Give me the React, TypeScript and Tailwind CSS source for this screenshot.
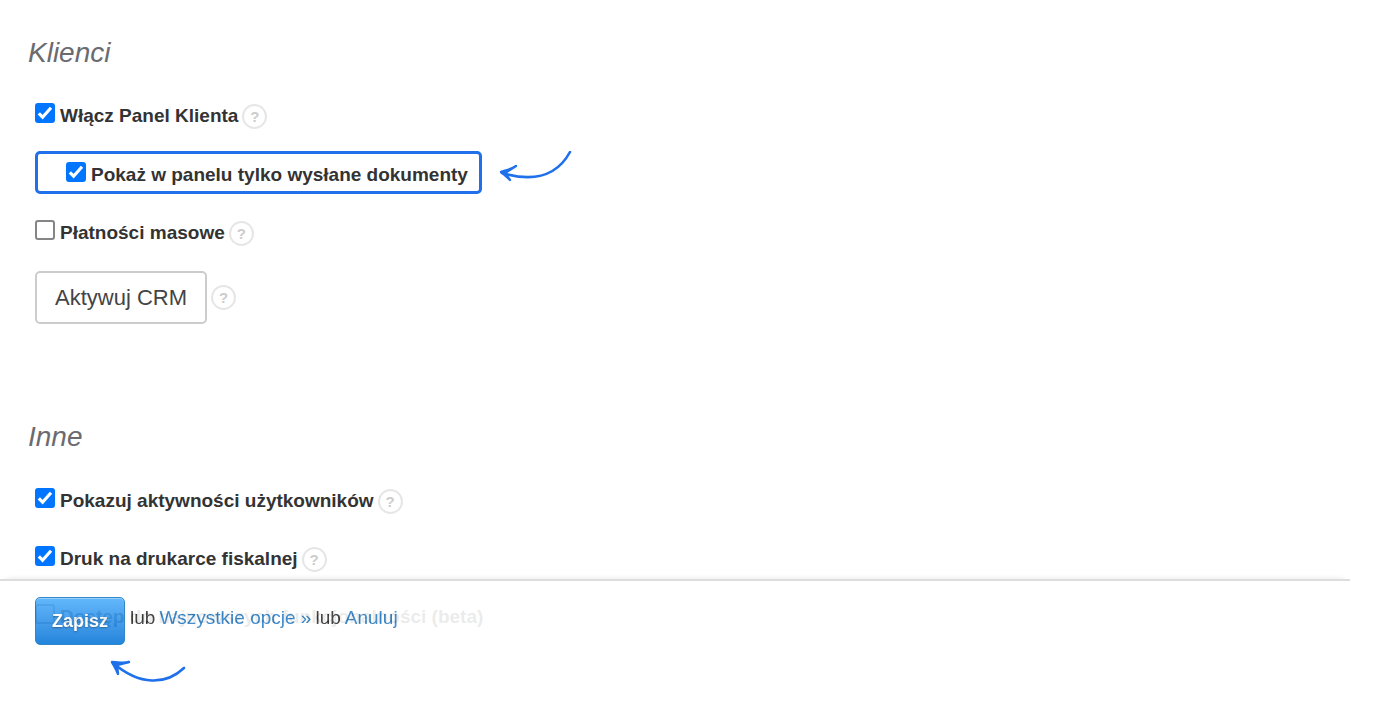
import { useId, useState } from 'react';

const Hint = () => (
  <button
    type="button"
    aria-label="Pomoc"
    className="flex size-[25px] shrink-0 items-center justify-center rounded-full border-2 border-[#e6e6e6] bg-white text-[15px] leading-none font-bold text-[#cccccc]"
  >
    ?
  </button>
);

interface OptionProps {
  label: string;
  checked?: boolean;
  hint?: boolean;
}

const Option = ({ label, checked = false, hint = false }: OptionProps) => {
  const id = useId();
  const [on, setOn] = useState(checked);

  return (
    <div className="flex h-[26px] items-center gap-1">
      <span className="relative mr-px mb-[6px] flex size-5 shrink-0">
        <input
          id={id}
          type="checkbox"
          checked={on}
          onChange={() => setOn(!on)}
          className="size-5 appearance-none rounded-[3px] border-2 border-[#858585] bg-white checked:border-[#0075ff] checked:bg-[#0075ff]"
        />
        {on && (
          <svg viewBox="0 0 20 20" className="pointer-events-none absolute inset-0 size-5" fill="none">
            <path d="M3.8 10.4 L7.6 14.2 L16 4.8" stroke="#fff" strokeWidth="3.2" />
          </svg>
        )}
      </span>
      <label htmlFor={id} className="text-[19px] leading-6 font-bold whitespace-nowrap">
        {label}
      </label>
      {hint && <Hint />}
    </div>
  );
};

const App = () => (
  <div className="min-h-screen bg-white font-['Liberation_Sans',Arial,sans-serif] text-[#333333]">
    <main className="px-7 pt-9">
      <section>
        <h2 className="text-[28px] leading-[34px] text-[#6b6b6f] italic">Klienci</h2>
        <div className="mt-[33px] flex flex-col items-start pl-[7px]">
          <Option label="Włącz Panel Klienta" checked hint />
          <div className="mt-[22px] flex items-center gap-4">
            <div className="rounded-[5px] border-3 border-[#1f70ea] pt-2 pr-[11px] pb-[3px] pl-7">
              <Option label="Pokaż w panelu tylko wysłane dokumenty" checked />
            </div>
            <svg width="76" height="43" viewBox="0 0 76 43" fill="none" stroke="#1f70ea" strokeLinecap="round" strokeLinejoin="round">
              <path d="M72 1 C60 23 38 32 4 22" strokeWidth="2.6" />
              <path d="M18 15 C14 18 9 19 3 21 C6 23 9 26 12 29 L7 22 Z" fill="#1f70ea" strokeWidth="2.4" />
            </svg>
          </div>
          <div className="mt-[26px]">
            <Option label="Płatności masowe" hint />
          </div>
          <div className="mt-[25px] flex items-center gap-1">
            <button type="button" className="h-[53px] rounded-[5px] border-2 border-[#cccccc] bg-white px-[18px] text-[22px] text-[#444444]">
              Aktywuj CRM
            </button>
            <Hint />
          </div>
        </div>
      </section>

      <section className="mt-24">
        <h2 className="text-[28px] leading-[34px] text-[#6b6b6f] italic">Inne</h2>
        <div className="mt-[34px] flex flex-col gap-8 pl-[7px]">
          <Option label="Pokazuj aktywności użytkowników" checked hint />
          <Option label="Druk na drukarce fiskalnej" checked hint />
          <Option label="Dostęp do najnowszych funkcjonalności (beta)" />
        </div>
      </section>
    </main>

    <footer className="fixed right-7 bottom-0 left-0">
      <div className="h-[125px] border-t-2 border-[#dadada] bg-white pt-4 pl-[35px] opacity-90 shadow-[0_-6px_6px_-6px_rgba(0,0,0,0.12)]">
        <div className="flex items-center gap-[5px] text-[19px]">
          <button
            type="button"
            className="h-12 rounded-[5px] border border-[#1c7ac4] bg-linear-to-b from-[#52b0fb] to-[#0878d8] px-4 text-[18px] font-bold text-white shadow-[inset_0_1px_0_rgba(255,255,255,0.35)] text-shadow-[0_1px_2px_rgba(0,0,0,0.4)]"
          >
            Zapisz
          </button>
          <p className="mb-[6px] flex gap-1 whitespace-nowrap">
            <span>lub</span>
            <a href="#opcje" className="text-[#3182c8]">Wszystkie opcje »</a>
            <span>lub</span>
            <a href="#anuluj" className="text-[#3182c8]">Anuluj</a>
          </p>
        </div>
      </div>
      <svg className="absolute top-20 left-[108px]" width="80" height="28" viewBox="0 0 80 28" fill="none" stroke="#1f70ea" strokeLinecap="round" strokeLinejoin="round">
        <path d="M76 9 C58 26 32 27 5 4" strokeWidth="2.6" />
        <path d="M21 3 C15 5 10 3 4 3 C6 7 8 10 10 15 L9 6 Z" fill="#1f70ea" strokeWidth="2.4" />
      </svg>
    </footer>
  </div>
);

export default App;
